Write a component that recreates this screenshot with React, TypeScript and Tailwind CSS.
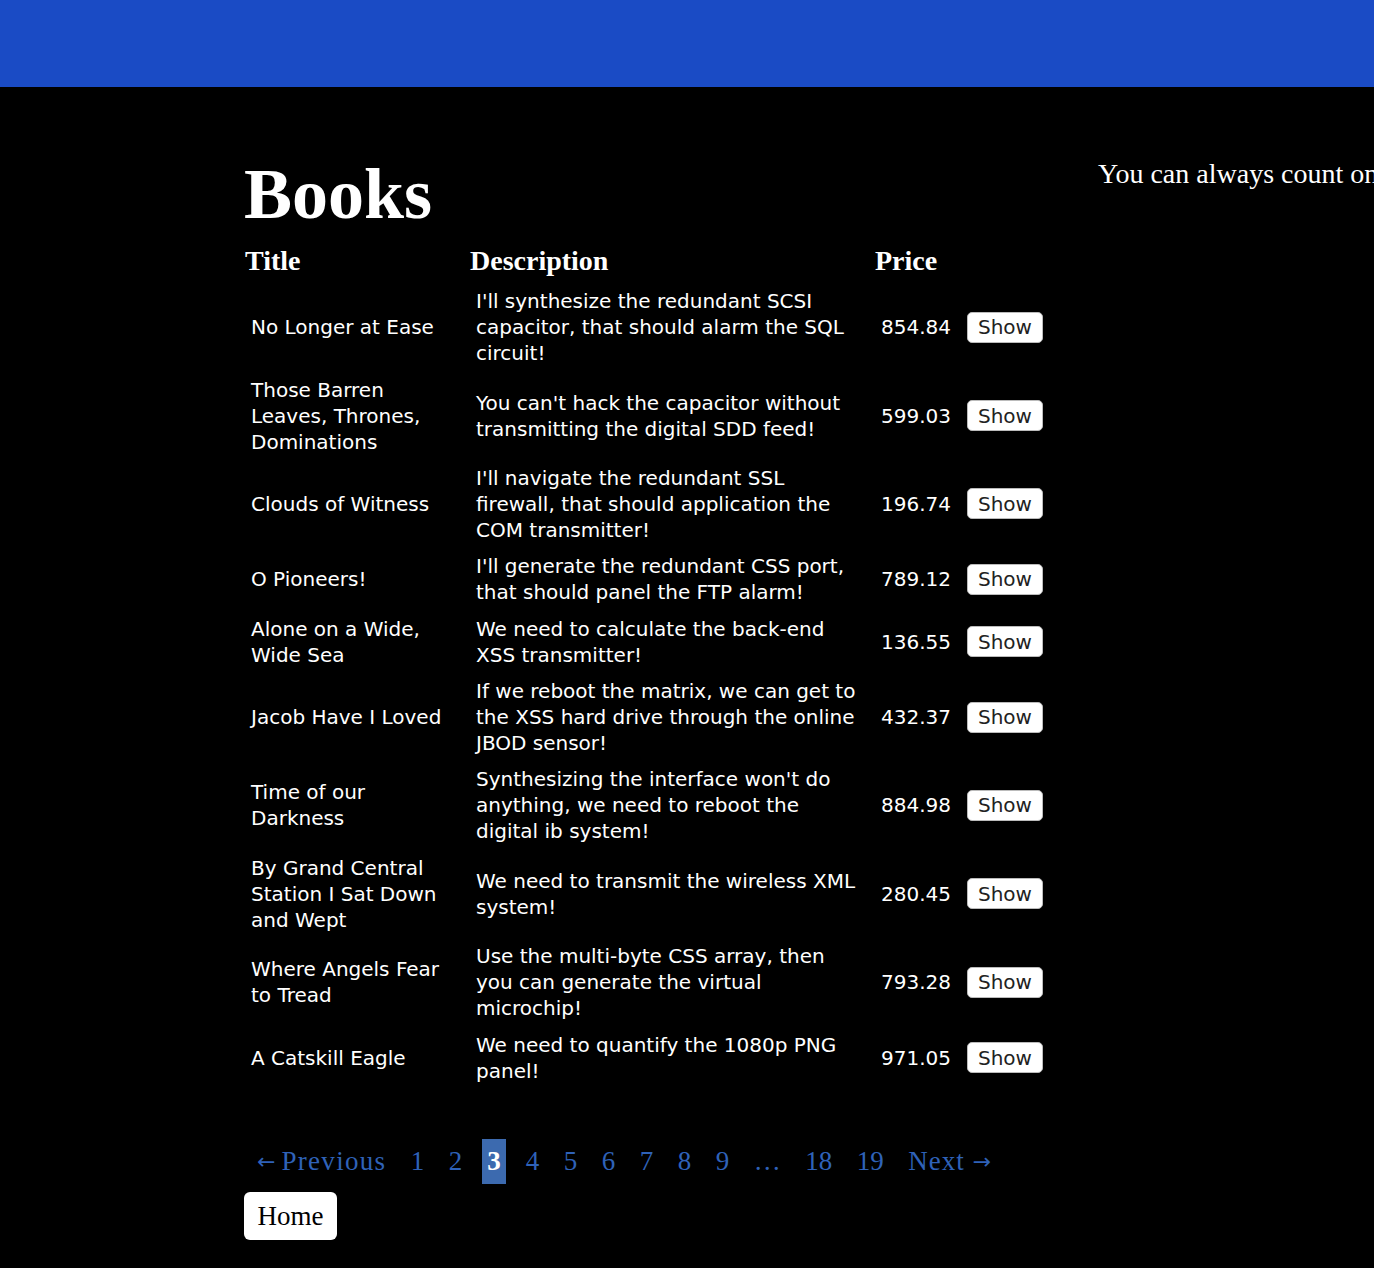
import React from "react";

const books = [
  ["No Longer at Ease", "I'll synthesize the redundant SCSI capacitor, that should alarm the SQL circuit!", "854.84"],
  ["Those Barren Leaves, Thrones, Dominations", "You can't hack the capacitor without transmitting the digital SDD feed!", "599.03"],
  ["Clouds of Witness", "I'll navigate the redundant SSL firewall, that should application the COM transmitter!", "196.74"],
  ["O Pioneers!", "I'll generate the redundant CSS port, that should panel the FTP alarm!", "789.12"],
  ["Alone on a Wide, Wide Sea", "We need to calculate the back-end XSS transmitter!", "136.55"],
  ["Jacob Have I Loved", "If we reboot the matrix, we can get to the XSS hard drive through the online JBOD sensor!", "432.37"],
  ["Time of our Darkness", "Synthesizing the interface won't do anything, we need to reboot the digital ib system!", "884.98"],
  ["By Grand Central Station I Sat Down and Wept", "We need to transmit the wireless XML system!", "280.45"],
  ["Where Angels Fear to Tread", "Use the multi-byte CSS array, then you can generate the virtual microchip!", "793.28"],
  ["A Catskill Eagle", "We need to quantify the 1080p PNG panel!", "971.05"],
];

const pages = ["1", "2", "3", "4", "5", "6", "7", "8", "9", "…", "18", "19"];

export default function App() {
  return (
    <div className="min-h-[1268px] bg-black text-white overflow-hidden">
      <div className="h-[87px] bg-[#1a4bc5]" />
      <div className="flex pt-[71px]">
        <div className="ml-[244px] w-[854px] shrink-0">
          <h1 className="font-['Liberation_Serif',serif] font-bold text-[72px] leading-[72px] mb-[15px]">Books</h1>
          <table className="table-fixed border-collapse w-[803px] font-['DejaVu_Sans',sans-serif] text-[20px] leading-[26px]">
            <colgroup>
              <col className="w-[225px]" />
              <col className="w-[405px]" />
              <col className="w-[87px]" />
              <col className="w-[86px]" />
            </colgroup>
            <thead>
              <tr className="h-[38px]">
                <th className="text-left align-top pl-px py-0 font-['Liberation_Serif',serif] font-bold text-[28px] leading-[32px]">Title</th>
                <th className="text-left align-top pl-px py-0 font-['Liberation_Serif',serif] font-bold text-[28px] leading-[32px]">Description</th>
                <th className="text-left align-top pl-px py-0 font-['Liberation_Serif',serif] font-bold text-[28px] leading-[32px]">Price</th>
                <th className="p-0" />
              </tr>
            </thead>
            <tbody>
              {books.map((b, i) => (
                <tr key={i}>
                  <td className="pl-[7px] pr-[6px] py-[5.2px] align-middle">{b[0]}</td>
                  <td className="pl-[7px] pr-[14px] py-[5.2px] align-middle">{b[1]}</td>
                  <td className="pl-[7px] pr-[5px] py-[5.2px] align-middle">{b[2]}</td>
                  <td className="pl-[6px] pr-[6px] py-[5.2px] align-middle">
                    <button className="bg-white text-[#222] border border-[#bbb] rounded-[5px] h-[31px] px-[10px] text-[20px] leading-[26px] font-['DejaVu_Sans',sans-serif]">Show</button>
                  </td>
                </tr>
              ))}
            </tbody>
          </table>
          <div className="mt-[50px] pl-[8px] flex items-center gap-[14.5px] font-['Liberation_Serif',serif] text-[27px] leading-[45px] text-[#2f62b8]">
            <span className="px-[5px] flex items-center">
              <span className="font-['DejaVu_Sans',sans-serif] text-[22px] mr-[6px]">←</span>
              <span className="tracking-[1.3px]">Previous</span>
            </span>
            {pages.map((p) =>
              p === "3" ? (
                <span key={p} className="px-[5.5px] bg-[#3c6aaf] text-white font-bold">{p}</span>
              ) : (
                <span key={p} className="px-[5px]">{p}</span>
              )
            )}
            <span className="px-[5px] flex items-center">
              <span className="tracking-[1px]">Next</span>
              <span className="font-['DejaVu_Sans',sans-serif] text-[22px] ml-[8px]">→</span>
            </span>
          </div>
          <button className="mt-[8px] bg-white text-black rounded-[6px] w-[93px] h-[48px] font-['Liberation_Serif',serif] text-[27px] leading-[32px]">Home</button>
        </div>
        <div className="whitespace-nowrap font-['Liberation_Serif',serif] text-[28px] leading-[32px]">
          You can always count on us.
        </div>
      </div>
    </div>
  );
}
